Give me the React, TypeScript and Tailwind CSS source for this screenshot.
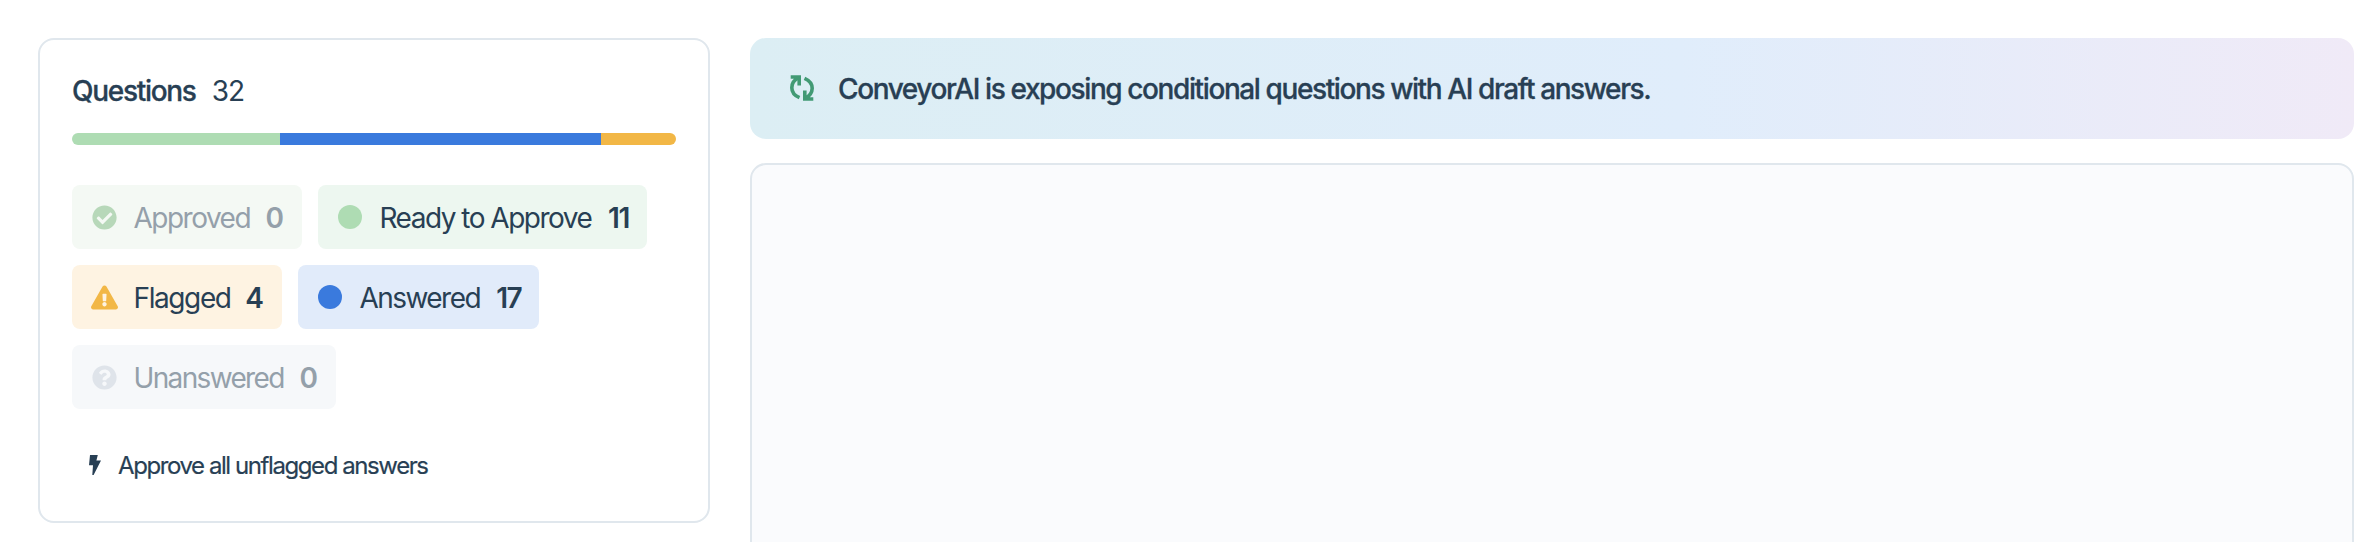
import React from "react";
import { FaCheckCircle, FaExclamationTriangle, FaQuestionCircle } from "react-icons/fa";

type ChipProps = {
  box: string;
  icon: React.ReactNode;
  label: string;
  tracking: string;
  count: number;
  countClass?: string;
};

function Chip({ box, icon, label, tracking, count, countClass = "" }: ChipProps) {
  return (
    <button className={`flex h-16 items-center justify-between rounded-lg pr-[18px] pl-[18px] text-[28px] leading-8 whitespace-nowrap ${box}`}>
      <span className="flex items-center">
        <span className="flex w-7 justify-center">{icon}</span>
        <span className={`ml-[15.5px] pt-px ${tracking}`}>{label}</span>
      </span>
      <span className={`pt-px font-semibold ${countClass}`}>{count}</span>
    </button>
  );
}

function Dot({ color }: { color: string }) {
  return <span className={`block size-6 rounded-full ${color}`} />;
}

function BoltIcon() {
  return (
    <svg viewBox="0 0 12 20" className="h-5 w-3" fill="currentColor">
      <path d="M1 0H8.8L7.4 5.6H12L4.6 20H3.3L4 10.2H0Z" />
    </svg>
  );
}

function CycleIcon() {
  return (
    <svg viewBox="0 0 24 26" className="-mt-0.5 h-[26px] w-6 text-[#429a74]" fill="none" stroke="currentColor" strokeWidth="3.6">
      <path d="M0.7 2H9.2V10.4M9.2 2.2C-0.6 7.4 -0.8 18.2 9.5 22.7" />
      <path d="M23.3 24H14.8V15.6M14.8 23.8C24.6 18.6 24.8 7.8 14.5 3.3" />
    </svg>
  );
}

export default function App() {
  return (
    <div className="flex h-[542px] w-[2380px] items-start gap-10 overflow-hidden bg-white pt-[38px] pl-[38px] font-[Inter,'Liberation_Sans',sans-serif] text-[#283f54]">
      <section className="flex h-[485px] w-[672px] shrink-0 flex-col rounded-2xl border-2 border-[#e0e7ed] px-8 pt-[35px]">
        <h2 className="flex h-8 items-center gap-4 text-[28px] leading-8">
          <span className="font-medium tracking-[-1.3px] [-webkit-text-stroke:0.3px_currentColor]">Questions</span>
          <span className="tracking-[-1px]">32</span>
        </h2>
        <div className="mt-[26px] flex h-3 overflow-hidden rounded-full">
          <div className="w-[208px] bg-[#aedcb3]" />
          <div className="w-[321px] bg-[#3a7add]" />
          <div className="flex-1 bg-[#f2b746]" />
        </div>
        <div className="mt-10 flex flex-wrap gap-4">
          <Chip box="w-[230px] bg-[#f4f9f4] text-[#94a0aa]" icon={<FaCheckCircle className="size-[25px] text-[#b7d8b9]" />} label="Approved" tracking="tracking-[-1.5px]" count={0} />
          <Chip box="w-[329px] bg-[#edf7f0]" icon={<Dot color="bg-[#aedcb3]" />} label="Ready to Approve" tracking="tracking-[-1.5px]" count={11} countClass="tracking-[-1.4px]" />
          <Chip box="w-[210px] bg-[#fef3e2]" icon={<FaExclamationTriangle className="size-[27px] text-[#f2b746]" />} label="Flagged" tracking="tracking-[-1.4px]" count={4} />
          <Chip box="w-[241px] bg-[#e1ebfa]" icon={<Dot color="bg-[#3a7add]" />} label="Answered" tracking="tracking-[-1.55px]" count={17} countClass="tracking-[-1.6px]" />
          <Chip box="w-[264px] bg-[#f6f8fa] text-[#94a0aa]" icon={<FaQuestionCircle className="size-[25px] text-[#dfe4ea]" />} label="Unanswered" tracking="tracking-[-1.65px]" count={0} />
        </div>
        <button className="mt-10 flex h-8 items-center gap-[17px] self-start pl-[17px] text-2xl leading-8 tracking-[-1.42px] whitespace-nowrap">
          <BoltIcon />
          <span className="pt-0.5 [-webkit-text-stroke:0.2px_currentColor]">Approve all unflagged answers</span>
        </button>
      </section>

      <main className="flex w-[1604px] shrink-0 flex-col gap-6">
        <div className="flex h-[101px] items-center gap-6 rounded-2xl bg-[linear-gradient(90deg,#dceef4_0%,#e0edfb_58%,#f0eaf7_100%)] pl-10">
          <CycleIcon />
          <p className="pt-px text-[28px] leading-8 font-medium tracking-[-1.4px] whitespace-nowrap [-webkit-text-stroke:0.3px_currentColor]">
            ConveyorAI is exposing conditional questions with AI draft answers.
          </p>
        </div>
        <div className="h-[420px] rounded-2xl border-2 border-[#e0e7ed] bg-[#fafbfd]" />
      </main>
    </div>
  );
}
